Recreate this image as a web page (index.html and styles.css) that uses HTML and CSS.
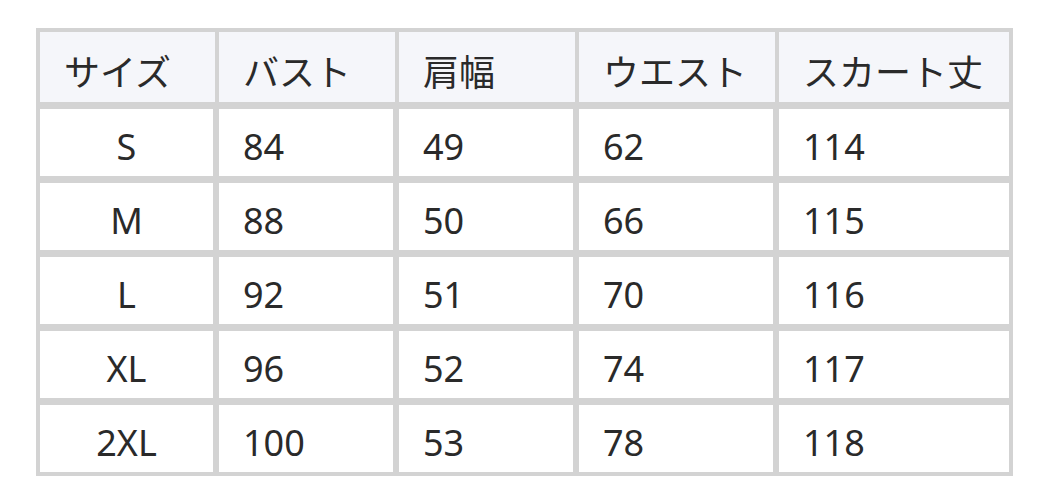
FILE: index.html
```html
<!DOCTYPE html>
<html lang="ja">
<head>
<meta charset="utf-8">
<link rel="stylesheet" href="styles.css">
</head>
<body>
<div class="page">
  <div class="size-table">
    <div class="cell head">サイズ</div>
    <div class="cell head">バスト</div>
    <div class="cell head">肩幅</div>
    <div class="cell head">ウエスト</div>
    <div class="cell head">スカート丈</div>

    <div class="cell body first">S</div>
    <div class="cell body">84</div>
    <div class="cell body">49</div>
    <div class="cell body">62</div>
    <div class="cell body last">114</div>

    <div class="cell body first">M</div>
    <div class="cell body">88</div>
    <div class="cell body">50</div>
    <div class="cell body">66</div>
    <div class="cell body last">115</div>

    <div class="cell body first">L</div>
    <div class="cell body">92</div>
    <div class="cell body">51</div>
    <div class="cell body">70</div>
    <div class="cell body last">116</div>

    <div class="cell body first">XL</div>
    <div class="cell body">96</div>
    <div class="cell body">52</div>
    <div class="cell body">74</div>
    <div class="cell body last">117</div>

    <div class="cell body first">2XL</div>
    <div class="cell body">100</div>
    <div class="cell body">53</div>
    <div class="cell body">78</div>
    <div class="cell body last">118</div>
  </div>
</div>
</body>
</html>
```
FILE: styles.css
```css
html, body {
  margin: 0;
  padding: 0;
  background: #ffffff;
}
.page {
  padding: 28px 0 0 36px;
}
.size-table {
  display: grid;
  width: 969px;
  grid-template-columns: 175px 176px 176px 196px 230px;
  grid-template-rows: 70px repeat(5, 67px);
  column-gap: 4px;
  row-gap: 7px;
  padding: 4px;
  background: #d3d3d3;
  font-family: "Noto Sans", "Noto Sans CJK JP", sans-serif;
  font-size: 36px;
  color: #2a2a2a;
}
.cell {
  display: flex;
  align-items: center;
  padding: 8px 0 0 24px;
  line-height: 1;
  box-sizing: border-box;
}
.head {
  background: #f5f6fa;
  padding-top: 12px;
}
.body {
  background: #ffffff;
  border-right: 2px solid #d3d3d3;
}
.body.last {
  border-right: none;
}
.body.first {
  justify-content: center;
  padding-left: 0;
}
```
